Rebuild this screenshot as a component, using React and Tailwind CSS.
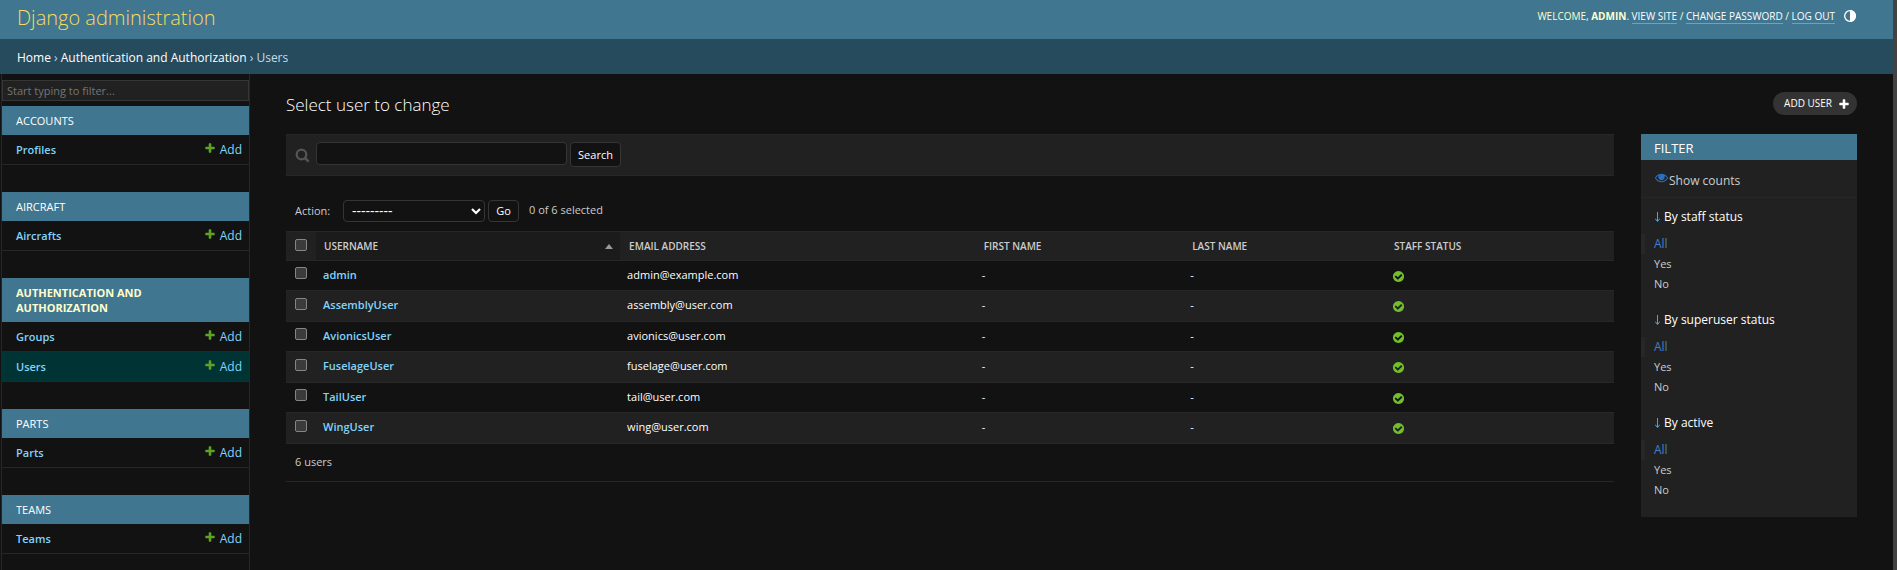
const sections = [
  { title: "Accounts", models: [{ name: "Profiles" }] },
  { title: "Aircraft", models: [{ name: "Aircrafts" }] },
  {
    title: "Authentication and Authorization",
    current: true,
    models: [{ name: "Groups" }, { name: "Users", current: true }],
  },
  { title: "Parts", models: [{ name: "Parts" }] },
  { title: "Teams", models: [{ name: "Teams" }] },
];

const users = [
  { name: "admin", email: "admin@example.com" },
  { name: "AssemblyUser", email: "assembly@user.com" },
  { name: "AvionicsUser", email: "avionics@user.com" },
  { name: "FuselageUser", email: "fuselage@user.com" },
  { name: "TailUser", email: "tail@user.com" },
  { name: "WingUser", email: "wing@user.com" },
];

const filters = ["By staff status", "By superuser status", "By active"];

function PlusIcon({ className }) {
  return (
    <svg viewBox="0 0 1792 1792" className={className} fill="currentColor" aria-hidden="true">
      <path d="M1600 796v192q0 40-28 68t-68 28h-416v416q0 40-28 68t-68 28h-192q-40 0-68-28t-28-68v-416h-416q-40 0-68-28t-28-68v-192q0-40 28-68t68-28h416v-416q0-40 28-68t68-28h192q40 0 68 28t28 68v416h416q40 0 68 28t28 68z" />
    </svg>
  );
}

function SearchIcon() {
  return (
    <svg viewBox="0 0 15 15" className="size-[15px] shrink-0 text-[#555]" fill="none" stroke="currentColor" aria-hidden="true">
      <circle cx="6.5" cy="6.5" r="4.8" strokeWidth="2.2" />
      <path d="M10 10l3.6 3.6" strokeWidth="2.6" />
    </svg>
  );
}

function ThemeIcon() {
  return (
    <svg viewBox="0 0 24 24" className="size-4" aria-hidden="true">
      <circle cx="12" cy="12" r="8" fill="none" stroke="#fff" strokeWidth="2" />
      <path d="M12 3a9 9 0 0 1 0 18z" fill="#fff" />
    </svg>
  );
}

function EyeIcon() {
  return (
    <svg viewBox="0 0 1792 1792" className="size-[13px] text-[#2b70c5]" fill="currentColor" aria-hidden="true">
      <path d="M1664 960q-152-236-381-353 61 104 61 225 0 185-131.500 316.500t-316.500 131.500-316.500-131.500-131.500-316.500q0-121 61-225-229 117-381 353 133 205 333.500 326.500t434.500 121.500 434.500-121.500 333.500-326.500zm-720-384q0-20-14-34t-34-14q-125 0-214.500 89.500t-89.500 214.500q0 20 14 34t34 14 34-14 14-34q0-86 61-147t147-61q20 0 34-14t14-34zm848 384q0 34-20 69-140 230-376.500 368.500t-499.500 138.500-499.500-139-376.500-368q-20-35-20-69t20-69q140-229 376.500-368t499.500-139 499.500 139 376.500 368q20 35 20 69z" />
      <circle cx="896" cy="832" r="330" />
    </svg>
  );
}

function YesIcon() {
  return (
    <svg viewBox="0 0 1792 1792" className="size-[13px]" fill="#70bf2b" role="img" aria-label="True">
      <path d="M1412 734q0-28-18-46l-91-90q-19-19-45-19t-45 19l-408 407-226-226q-19-19-45-19t-45 19l-91 90q-18 18-18 46 0 27 18 45l362 362q19 19 45 19 27 0 46-19l543-543q18-18 18-45zm252 162q0 209-103 385.500t-279.500 279.500-385.500 103-385.500-103-279.500-279.500-103-385.500 103-385.500 279.500-279.500 385.500-103 385.500 103 279.500 279.500 103 385.500z" />
    </svg>
  );
}

function Checkbox({ label }) {
  return (
    <input
      type="checkbox"
      aria-label={label}
      className="block size-3 appearance-none rounded-xs border border-[#858585] bg-[#3b3b3b]"
    />
  );
}

function Header() {
  const link = "border-b border-[#7a9fb1] text-white";
  return (
    <header className="flex h-[39px] items-start justify-between bg-[#417690] pl-[17px] pr-9">
      <a href="#site" className="pt-[3px] text-[20px] font-light leading-[30px] text-[#f5dd5d]">
        Django administration
      </a>
      <div className="flex items-center gap-[7px] pt-2 text-[10px] uppercase leading-[14px] text-[#ffc]">
        <span>
          Welcome, <strong>admin</strong>. <a href="#view" className={link}>View site</a> /{" "}
          <a href="#password" className={link}>Change password</a> /{" "}
          <a href="#logout" className={link}>Log out</a>
        </span>
        <button type="button" aria-label="Toggle theme" className="-mr-px">
          <ThemeIcon />
        </button>
      </div>
    </header>
  );
}

function Sidebar() {
  return (
    <nav className="ml-px w-[249px] shrink-0 border-x border-[#272727] pt-[6px]">
      <input
        type="search"
        aria-label="Filter navigation items"
        placeholder="Start typing to filter..."
        className="mb-[5px] block h-[21px] w-full border border-[#353535] bg-[#212121] px-1 text-[11px] text-[#eee] placeholder:text-[#757575]"
      />
      {sections.map((s) => (
        <section key={s.title} className="mb-[27px]">
          <h2
            className={
              "bg-[#417690] px-[14px] py-[7px] text-[11px] uppercase leading-[15px] " +
              (s.current ? "font-bold text-[#ffc]" : "text-white")
            }
          >
            <a href="#app" className="block max-w-[150px]">{s.title}</a>
          </h2>
          {s.models.map((m) => (
            <div
              key={m.name}
              className={
                "flex h-[30px] items-center justify-between border-b border-[#272727] pl-[14px] pr-[7px] pt-px text-[11px] text-[#81d4fa] " +
                (m.current ? "bg-[#003333]" : "")
              }
            >
              <a href="#model" className="font-semibold">{m.name}</a>
              <a href="#add" className="flex gap-1 text-xs">
                <PlusIcon className="size-3 text-[#5fa225]" />
                Add
              </a>
            </div>
          ))}
        </section>
      ))}
    </nav>
  );
}

function Results() {
  const th = "pl-[9px] text-left font-semibold";
  const td = "pb-px pl-[7px]";
  return (
    <table className="w-full table-fixed border-collapse text-[11px]">
      <colgroup>
        <col className="w-[30px]" />
        <col className="w-[22.9%]" />
        <col className="w-[26.7%]" />
        <col className="w-[15.7%]" />
        <col className="w-[15.2%]" />
        <col />
      </colgroup>
      <thead>
        <tr className="h-[29px] border-y border-[#272727] bg-[#212121] text-[10px] uppercase text-[#ccc]">
          <th className="pb-[2px] pl-[9px]"><Checkbox label="Select all users" /></th>
          <th className="bg-[#1b1b1b] pl-2 text-left font-semibold">
            <div className="flex items-center justify-between pr-[7px]">
              <a href="#sort">Username</a>
              <svg viewBox="0 0 8 5" className="h-[5px] w-2" fill="#999" aria-hidden="true">
                <path d="M4 0l4 5H0z" />
              </svg>
            </div>
          </th>
          <th className={th}>Email address</th>
          <th className={th}>First name</th>
          <th className={th}>Last name</th>
          <th className={th}>Staff status</th>
        </tr>
      </thead>
      <tbody>
        {users.map((u) => (
          <tr key={u.name} className="h-[30px] border-b border-[#272727] text-white even:h-[31px] even:bg-[#212121]">
            <td className="pb-[5px] pl-[9px]"><Checkbox label={"Select " + u.name} /></td>
            <th className="pb-px pl-[7px] text-left font-semibold text-[#81d4fa]">
              <a href="#user">{u.name}</a>
            </th>
            <td className={td}>{u.email}</td>
            <td className={td}>-</td>
            <td className={td}>-</td>
            <td className="pl-[7px] pt-px"><YesIcon /></td>
          </tr>
        ))}
      </tbody>
    </table>
  );
}

function Changelist() {
  return (
    <div className="min-w-0 flex-1">
      <form className="flex h-[42px] items-start gap-[3px] border-y border-[#272727] bg-[#212121] pl-[9px] pt-[7px]">
        <label htmlFor="searchbar" className="flex h-[27px] w-[18px] items-center">
          <SearchIcon />
        </label>
        <input
          id="searchbar"
          type="text"
          aria-label="Search"
          className="h-[23px] w-[251px] rounded border border-[#353535] bg-[#121212] px-1 text-xs text-[#eee]"
        />
        <button type="button" className="h-[25px] w-[51px] rounded border border-[#353535] bg-[#121212] pt-px text-[11px] text-white">
          Search
        </button>
      </form>
      <div className="flex h-[55px] items-end gap-[3px] pb-[9px] pl-[9px] text-[11px] leading-[22px] text-[#ccc]">
        <label htmlFor="action" className="w-[45px]">Action:</label>
        <div className="grid items-center">
          <select
            id="action"
            className="col-start-1 row-start-1 h-[22px] w-[142px] appearance-none rounded border border-[#353535] bg-[#121212] pl-2 text-sm leading-5 text-white"
          >
            <option>---------</option>
          </select>
          <svg viewBox="0 0 10 7" className="pointer-events-none col-start-1 row-start-1 mr-1 h-[7px] w-[10px] justify-self-end" fill="none" stroke="#fff" strokeWidth="2.2" aria-hidden="true">
            <path d="M1 1l4 4 4-4" />
          </svg>
        </div>
        <button type="button" className="h-[22px] w-[31px] rounded border border-[#353535] bg-[#121212] text-[11px] leading-5 text-white">
          Go
        </button>
        <span className="pb-px pl-[7px]">0 of 6 selected</span>
      </div>
      <Results />
      <p className="flex h-[38px] items-center border-b border-[#272727] pl-[9px] text-[11px] text-[#ccc]">6 users</p>
    </div>
  );
}

function FilterPanel() {
  return (
    <aside className="w-[216px] shrink-0 bg-[#212121] pb-[10px] text-[#ccc]">
      <h2 className="h-[26px] bg-[#417690] pl-[13px] text-[13px] uppercase leading-[28px] text-white">Filter</h2>
      <a href="#counts" className="flex h-[38px] items-center border-b border-[#272727] pl-[14px] text-xs">
        <span className="pb-[2px]"><EyeIcon /></span>
        <span className="pl-px pt-1">Show counts</span>
      </a>
      {filters.map((f) => (
        <details key={f} open className="pb-[7px]">
          <summary className="flex h-9 items-center gap-1 pl-[14px] pt-[2px] text-xs text-white">
            <svg viewBox="0 0 5 10" className="h-[10px] w-[5px]" fill="none" stroke="#4fa3dd" aria-hidden="true">
              <path d="M2.500 0v9M0 6.500l2.500 3 2.500-3" />
            </svg>
            {f}
          </summary>
          <ul className="text-[11px] leading-5">
            <li className="border-l-4 border-[#272727] pl-[9px] text-xs leading-5 text-[#417fc9]"><a href="#all">All</a></li>
            <li className="pl-[13px]"><a href="#yes">Yes</a></li>
            <li className="pl-[13px]"><a href="#no">No</a></li>
          </ul>
        </details>
      ))}
    </aside>
  );
}

export default function App() {
  return (
    <div className="flex h-screen overflow-hidden bg-[#121212] font-['Open_Sans',sans-serif]">
      <div className="flex min-w-0 flex-1 flex-col">
        <Header />
        <nav aria-label="Breadcrumbs" className="h-[35px] bg-[#264b5d] pl-[17px] text-xs leading-[37px] text-[#c4dce8]">
          <a href="#home" className="text-white">Home</a> › <a href="#auth" className="text-white">Authentication and Authorization</a> › Users
        </nav>
        <div className="flex min-h-0 flex-1">
          <Sidebar />
          <main className="min-w-0 flex-1 pl-9 pr-9 pt-[18px]">
            <div className="flex h-[42px] items-start justify-between">
              <h1 className="text-[17px] font-light leading-[25px] text-white">Select user to change</h1>
              <a href="#adduser" className="flex h-[23px] items-center gap-[6px] rounded-full bg-[#333] pl-[11px] pr-[7px] text-[10px] uppercase text-white">
                Add user
                <PlusIcon className="size-3" />
              </a>
            </div>
            <div className="flex items-start gap-[27px]">
              <Changelist />
              <FilterPanel />
            </div>
          </main>
        </div>
      </div>
      <div className="w-1 bg-[#424242]" aria-hidden="true" />
    </div>
  );
}
